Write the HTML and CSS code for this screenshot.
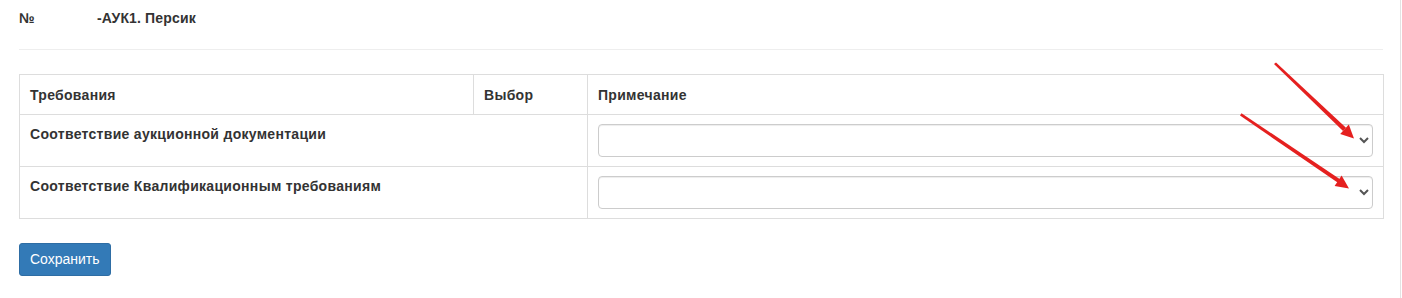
FILE: index.html
```html
<!DOCTYPE html>
<html lang="ru">
<head>
  <meta charset="UTF-8">
  <title>Оценка заявки</title>
  <link rel="stylesheet" href="styles.css">
</head>
<body>
  <div class="page">
    <div class="lot-title">
      <span class="lot-num">№</span>
      <span class="lot-name">-АУК1. Персик</span>
    </div>
    <hr class="divider">

    <table class="req-table">
      <colgroup>
        <col class="col-req">
        <col class="col-choice">
        <col class="col-note">
      </colgroup>
      <thead>
        <tr>
          <th>Требования</th>
          <th>Выбор</th>
          <th>Примечание</th>
        </tr>
      </thead>
      <tbody>
        <tr>
          <td colspan="2">Соответствие аукционной документации</td>
          <td>
            <select class="form-control">
              <option></option>
              <option>Соответствует</option>
              <option>Не соответствует</option>
            </select>
          </td>
        </tr>
        <tr>
          <td colspan="2">Соответствие Квалификационным требованиям</td>
          <td>
            <select class="form-control">
              <option></option>
              <option>Соответствует</option>
              <option>Не соответствует</option>
            </select>
          </td>
        </tr>
      </tbody>
    </table>

    <button class="btn-save" type="button">Сохранить</button>
  </div>

  <!-- пометки поверх скриншота -->
  <svg class="marks" width="1402" height="298" viewBox="0 0 1402 298">
    <g fill="#e5201f" stroke="none">
      <path d="M1274 64 L1276 62.5 L1346 127.8 L1343 131 Z"/>
      <polygon points="1354,138.5 1340.2,134 1348.8,124.6"/>
      <path d="M1240 115.5 L1241.5 113.3 L1340 179.2 L1337.6 182.6 Z"/>
      <polygon points="1349,188.5 1334.6,186 1341.6,175.4"/>
    </g>
  </svg>
</body>
</html>
```

FILE: styles.css
```css
* {
  box-sizing: border-box;
}

body {
  margin: 0;
  font-family: "Liberation Sans", Arial, sans-serif;
  font-size: 14px;
  line-height: 20px;
  color: #333;
  background-color: #fff;
}

.page {
  width: 1401px;
  min-height: 298px;
  padding: 8px 17px 0 19px;
  border-right: 1px solid #e3e3e3;
}

.lot-title {
  display: flex;
  font-weight: bold;
  letter-spacing: 0.15px;
}

.lot-num {
  width: 78px;
}

.divider {
  margin: 21px 0 24px;
  border: 0;
  border-top: 1px solid #eee;
}

.req-table {
  width: 1365px;
  border-collapse: collapse;
  border-spacing: 0;
  table-layout: fixed;
  border: 1px solid #ddd;
  margin-bottom: 24px;
}

.col-req {
  width: 454px;
}

.col-choice {
  width: 114px;
}

.req-table th,
.req-table td {
  border: 1px solid #ddd;
  padding: 9px 10px;
  text-align: left;
  vertical-align: top;
  font-weight: bold;
  letter-spacing: 0.3px;
}

.req-table th {
  padding-top: 10px;
}

.form-control {
  display: block;
  width: 100%;
  height: 33px;
  padding: 6px 10px;
  font-family: inherit;
  font-size: 14px;
  color: #555;
  background-color: #fff;
  border: 1px solid #ccc;
  border-radius: 4px;
  box-shadow: inset 0 1px 1px rgba(0, 0, 0, 0.075);
}

.btn-save {
  display: inline-block;
  height: 33px;
  padding: 6px 10px;
  font-family: inherit;
  font-size: 14px;
  line-height: 19px;
  color: #fff;
  background-color: #337ab7;
  border: 1px solid #2e6da4;
  border-radius: 3px;
  cursor: pointer;
}

.btn-save:hover {
  background-color: #286090;
}

.marks {
  position: absolute;
  top: 0;
  left: 0;
  pointer-events: none;
}
```
